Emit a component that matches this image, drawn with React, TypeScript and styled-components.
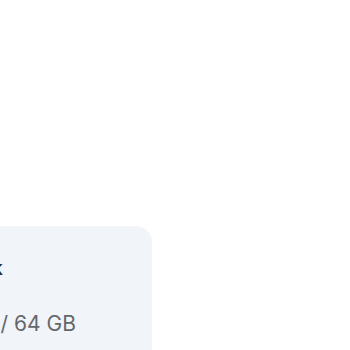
import React from "react";
import styled, { createGlobalStyle } from "styled-components";

const Global = createGlobalStyle`
  html, body { margin: 0; padding: 0; background: #ffffff; }
  body { font-family: Inter, "Noto Sans", sans-serif; overflow: hidden; }
`;

const Page = styled.div`
  width: 350px;
  height: 350px;
  padding-top: 226px;
  box-sizing: border-box;
  overflow: hidden;
`;

const Card = styled.div`
  width: 272px;
  margin-left: -120px;
  height: 160px;
  background: #f1f4f8;
  border-radius: 16px;
  padding: 28px 76px 28px 24px;
  box-sizing: border-box;
  display: flex;
  flex-direction: column;
  align-items: flex-end;
  gap: 28px;
`;

const Title = styled.div`
  font-size: 20px;
  font-weight: 600;
  color: #2b2f36;
  line-height: 28px;
  white-space: nowrap;
  margin-right: 73px;
`;

const Value = styled.div`
  font-size: 21px;
  color: #63676e;
  line-height: 28px;
  white-space: nowrap;
`;

export default function App() {
  return (
    <>
      <Global />
      <Page>
        <Card>
          <Title>Disk</Title>
          <Value>48 GB / 64 GB</Value>
        </Card>
      </Page>
    </>
  );
}
